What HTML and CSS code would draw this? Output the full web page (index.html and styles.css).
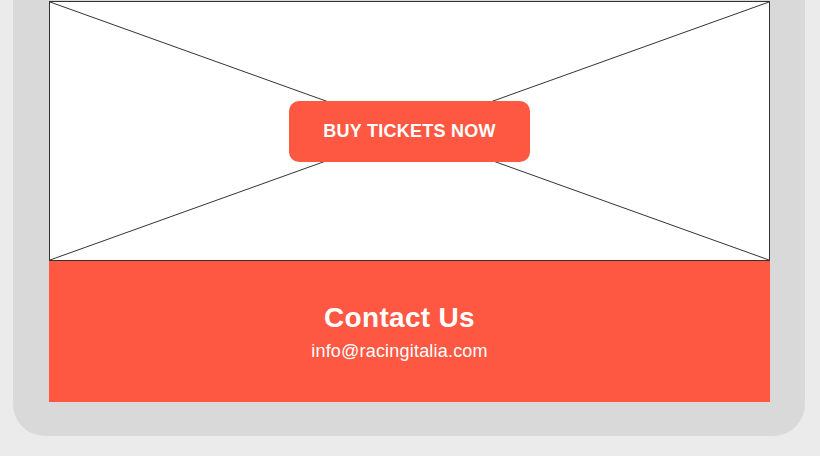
FILE: index.html
```html
<!DOCTYPE html>
<html lang="en">
<head>
<meta charset="utf-8">
<title>Racing Italia</title>
<link rel="stylesheet" href="styles.css">
</head>
<body>
  <div class="panel">
    <section class="hero">
      <svg class="placeholder" viewBox="0 0 100 100" preserveAspectRatio="none" aria-hidden="true">
        <line x1="0" y1="0" x2="100" y2="100" vector-effect="non-scaling-stroke"/>
        <line x1="100" y1="0" x2="0" y2="100" vector-effect="non-scaling-stroke"/>
      </svg>
      <a class="cta" href="#">BUY TICKETS NOW</a>
    </section>
    <footer class="contact">
      <h2 class="contact-title">Contact Us</h2>
      <p class="contact-email">info@racingitalia.com</p>
    </footer>
  </div>
</body>
</html>
```

FILE: styles.css
```css
* { box-sizing: border-box; }

html, body {
  margin: 0;
  padding: 0;
  background: #ebebeb;
  font-family: "Liberation Sans", Arial, sans-serif;
}

body {
  padding: 0 15px 20px 13px;
}

.panel {
  width: 792px;
  background: #d9d9d9;
  border-radius: 0 0 32px 32px;
  padding: 1px 35px 34px 36px;
}

.hero {
  position: relative;
  height: 260px;
  background: #ffffff;
  border: 1px solid #333333;
  display: flex;
  align-items: center;
  justify-content: center;
}

.placeholder {
  position: absolute;
  inset: 0;
  width: 100%;
  height: 100%;
}

.placeholder line {
  stroke: #333333;
  stroke-width: 1;
}

.cta {
  position: relative;
  z-index: 1;
  display: flex;
  align-items: center;
  justify-content: center;
  width: 241px;
  height: 61px;
  margin-top: 1px;
  background: #ff5842;
  color: #ffffff;
  border-radius: 10px;
  font-size: 18px;
  font-weight: bold;
  letter-spacing: 0.25px;
  text-decoration: none;
}

.contact {
  height: 141px;
  background: #ff5842;
  color: #ffffff;
  text-align: center;
  padding: 41px 20px 0 0;
}

.contact-title {
  margin: 0;
  font-size: 28px;
  font-weight: bold;
  line-height: 32px;
  letter-spacing: 0.3px;
}

.contact-email {
  margin: 7px 0 0;
  font-size: 18px;
  line-height: 21px;
  letter-spacing: 0.2px;
}
```
